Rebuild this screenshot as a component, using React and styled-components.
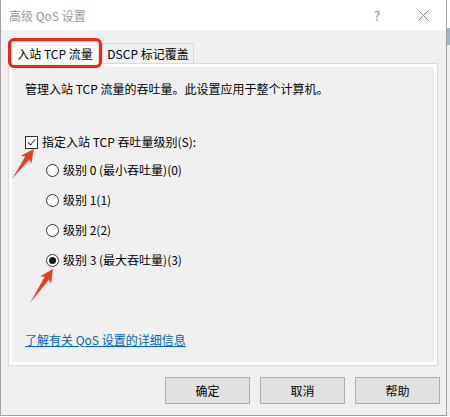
import styled, { createGlobalStyle } from 'styled-components';

const LEVELS = [
  { key: 0, label: '级别 0 (最小吞吐量)(0)' },
  { key: 1, label: '级别 1(1)' },
  { key: 2, label: '级别 2(2)' },
  { key: 3, label: '级别 3 (最大吞吐量)(3)' },
];

const GlobalStyle = createGlobalStyle`
  body {
    margin: 0;
    background: linear-gradient(to bottom, #fff 0 28px, #9fb6cf 28px 45px, #f0f0f0 45px);
  }
`;

const Window = styled.div`
  position: relative;
  width: 447px;
  height: 416px;
  box-sizing: border-box;
  border: 1px solid #a0a0a0;
  border-top: none;
  background: #f0f0f0;
  display: flex;
  flex-direction: column;
  font-family: 'Noto Sans CJK SC', 'Liberation Sans', sans-serif;
  font-size: 12px;
  color: #000;
`;

const TitleBar = styled.div`
  display: flex;
  height: 30px;
  padding: 0 0 0 8px;
  align-items: center;
  background: #fff;
  color: #9a9a9a;
`;

const TitleText = styled.span`
  flex: 1;
`;

const TitleButton = styled.span`
  display: flex;
  width: 46px;
  height: 30px;
  align-items: center;
  justify-content: center;
  font-size: 13px;
  color: #8a8a8a;
`;

const Body = styled.div`
  display: flex;
  padding: 11px 8px 0 7px;
  flex-direction: column;
`;

const TabRow = styled.div`
  display: flex;
  height: 22px;
  padding-left: 3px;
  align-items: flex-end;
`;

const Tab = styled.div`
  position: relative;
  display: flex;
  box-sizing: border-box;
  width: ${({ $active }) => ($active ? '88px' : '92px')};
  height: ${({ $active }) => ($active ? '24px' : '20px')};
  margin-bottom: ${({ $active }) => ($active ? '-2px' : '0')};
  margin-left: ${({ $active }) => ($active ? '0' : '3px')};
  align-items: center;
  justify-content: center;
  border: 1px solid #d9d9d9;
  border-bottom: none;
  background: ${({ $active }) => ($active ? '#fff' : '#f0f0f0')};
  z-index: ${({ $active }) => ($active ? 1 : 0)};
  outline: ${({ $active }) => ($active ? '3px solid #e8261f' : 'none')};
  border-radius: ${({ $active }) => ($active ? '3px' : '0')};
`;

const Panel = styled.div`
  box-sizing: border-box;
  height: 303px;
  padding: 3px;
  border: 1px solid #d9d9d9;
  background: #fff;
`;

const PanelInner = styled.div`
  display: flex;
  height: 100%;
  box-sizing: border-box;
  padding: 14px 13px 14px 13px;
  flex-direction: column;
  background: #f0f0f0;
`;

const Line = styled.div`
  display: flex;
  height: 16px;
  align-items: center;
  line-height: 16px;
`;

const CheckRow = styled(Line)`
  margin-top: 37px;
  gap: 4px;
`;

const RadioRow = styled(Line)`
  margin-top: ${({ $first }) => ($first ? '12px' : '14px')};
  padding-left: 21px;
  gap: 4px;
`;

const CheckBox = styled.span`
  display: flex;
  box-sizing: border-box;
  width: 13px;
  height: 13px;
  align-items: center;
  justify-content: center;
  border: 1px solid #333;
  background: #fff;
`;

const Radio = styled.span`
  display: flex;
  box-sizing: border-box;
  width: 13px;
  height: 13px;
  align-items: center;
  justify-content: center;
  border: 1px solid #333;
  border-radius: 50%;
  background: #fff;

  &::after {
    content: '';
    display: ${({ $checked }) => ($checked ? 'block' : 'none')};
    width: 7px;
    height: 7px;
    border-radius: 50%;
    background: #1a1a1a;
  }
`;

const Link = styled.a`
  margin-top: auto;
  line-height: 16px;
  color: #0066cc;
  text-decoration: underline;
`;

const ButtonRow = styled.div`
  display: flex;
  margin: 11px -2px 0 0;
  justify-content: flex-end;
  gap: 10px;
`;

const Button = styled.button`
  width: 85px;
  height: 27px;
  padding: 0;
  border: 1px solid #adadad;
  background: #e1e1e1;
  font-family: inherit;
  font-size: 12px;
  color: #000;
`;

const Overlay = styled.svg`
  position: absolute;
  top: 0;
  left: -1px;
  width: 447px;
  height: 416px;
  pointer-events: none;
`;

const Arrow = ({ x, y, length, angle }) => {
  const L = length;
  const points = [
    [0, 0],
    [L - 11, -2.5],
    [L - 13, -6.5],
    [L, 0],
    [L - 13, 6.5],
    [L - 11, 2.5],
  ]
    .map((p) => p.join(','))
    .join(' ');
  return (
    <polygon
      points={points}
      fill="#f03a27"
      transform={`translate(${x} ${y}) rotate(${angle})`}
    />
  );
};

const App = () => (
  <>
    <GlobalStyle />
    <Window>
      <TitleBar>
        <TitleText>高级 QoS 设置</TitleText>
        <TitleButton>?</TitleButton>
        <TitleButton>
          <svg width="11" height="11" viewBox="0 0 11 11">
            <path d="M0.5 0.5 L10.5 10.5 M10.5 0.5 L0.5 10.5" stroke="#8a8a8a" strokeWidth="1" />
          </svg>
        </TitleButton>
      </TitleBar>
      <Body>
        <TabRow>
          <Tab $active>入站 TCP 流量</Tab>
          <Tab>DSCP 标记覆盖</Tab>
        </TabRow>
        <Panel>
          <PanelInner>
            <Line>管理入站 TCP 流量的吞吐量。此设置应用于整个计算机。</Line>
            <CheckRow>
              <CheckBox>
                <svg width="9" height="9" viewBox="0 0 9 9">
                  <path d="M1 4.5 L3.5 7 L8 1.5" fill="none" stroke="#444" strokeWidth="1.1" />
                </svg>
              </CheckBox>
              指定入站 TCP 吞吐量级别(S):
            </CheckRow>
            {LEVELS.map((level) => (
              <RadioRow key={level.key} $first={level.key === 0}>
                <Radio $checked={level.key === 3} />
                {level.label}
              </RadioRow>
            ))}
            <Link>了解有关 QoS 设置的详细信息</Link>
          </PanelInner>
        </Panel>
        <ButtonRow>
          <Button>确定</Button>
          <Button>取消</Button>
          <Button>帮助</Button>
        </ButtonRow>
      </Body>
      <Overlay viewBox="0 0 447 416">
        <Arrow x={12} y={179} length={37} angle={-54} />
        <Arrow x={30} y={303} length={41} angle={-56} />
      </Overlay>
    </Window>
  </>
);

export default App;
